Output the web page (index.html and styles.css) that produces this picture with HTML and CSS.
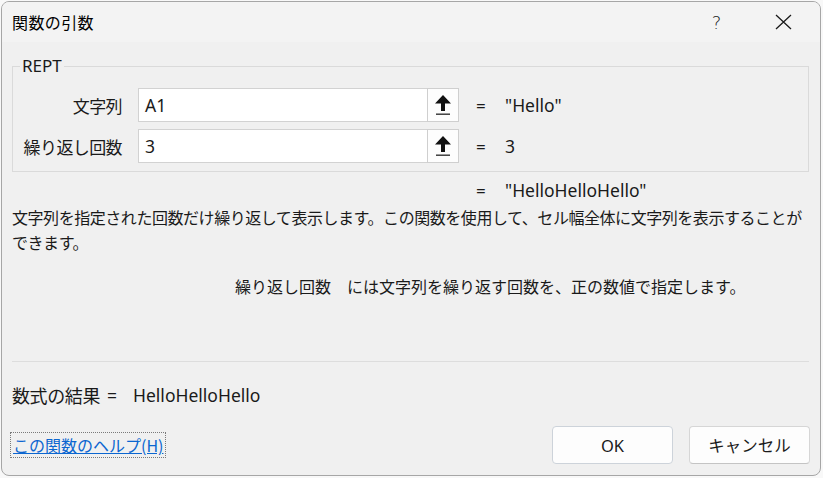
FILE: index.html
```html
<!DOCTYPE html>
<html lang="ja">
<head>
    <meta charset="UTF-8">
    <title>関数の引数</title>
    <link rel="stylesheet" href="styles.css">
</head>
<body>
<div class="dialog">
    <div class="titlebar">
        <span class="title">関数の引数</span>
        <span class="ctrl help">?</span>
        <span class="ctrl close">
            <svg width="17" height="16" viewBox="0 0 17 16"><path d="M1 1 L16 15 M16 1 L1 15" stroke="#1b1b1b" stroke-width="1.3" fill="none"/></svg>
        </span>
    </div>
    <div class="content">
        <fieldset class="args">
            <legend>REPT</legend>
            <div class="arg-row">
                <label>文字列</label>
                <div class="ref-box">
                    <span class="ref-input">A1</span>
                    <span class="ref-btn">
                        <svg width="18" height="22" viewBox="0 0 18 22"><path d="M9 1 L17 9.5 L11 9.5 L11 17 L7 17 L7 9.5 L1 9.5 Z" fill="#111"/><rect x="2" y="19.5" width="14" height="1.4" fill="#333"/></svg>
                    </span>
                </div>
                <span class="eq">=</span>
                <span class="val">"Hello"</span>
            </div>
            <div class="arg-row">
                <label>繰り返し回数</label>
                <div class="ref-box">
                    <span class="ref-input">3</span>
                    <span class="ref-btn">
                        <svg width="18" height="22" viewBox="0 0 18 22"><path d="M9 1 L17 9.5 L11 9.5 L11 17 L7 17 L7 9.5 L1 9.5 Z" fill="#111"/><rect x="2" y="19.5" width="14" height="1.4" fill="#333"/></svg>
                    </span>
                </div>
                <span class="eq">=</span>
                <span class="val">3</span>
            </div>
        </fieldset>
        <div class="total">
            <span class="eq">=</span>
            <span class="val">"HelloHelloHello"</span>
        </div>
        <p class="desc">文字列を指定された回数だけ繰り返して表示します。この関数を使用して、セル幅全体に文字列を表示することができます。</p>
        <p class="arg-help">繰り返し回数　には文字列を繰り返す回数を、正の数値で指定します。</p>
        <div class="spacer"></div>
        <div class="sep"></div>
        <div class="result">
            <span class="result-label">数式の結果</span>
            <span class="result-eq">=</span>
            <span class="result-val">HelloHelloHello</span>
        </div>
        <div class="footer">
            <a class="help-link" href="#">この関数のヘルプ(H)</a>
            <div class="buttons">
                <button class="btn ok">OK</button>
                <button class="btn">キャンセル</button>
            </div>
        </div>
    </div>
</div>
</body>
</html>
```

FILE: styles.css
```css
html, body {
    margin: 0;
    height: 100%;
}
body {
    background: #f8f8f8;
    font-family: "Noto Sans", "Noto Sans CJK JP", sans-serif;
    color: #1a1a1a;
}
.dialog {
    box-sizing: border-box;
    margin: 1px;
    width: 820px;
    height: 475px;
    border: 1px solid #a6a6a6;
    border-radius: 8px;
    background: #f0f0f0;
    display: flex;
    flex-direction: column;
    overflow: hidden;
}
.titlebar {
    height: 40px;
    flex: none;
    display: flex;
    align-items: center;
    padding-left: 10px;
    background: #f3f3f3;
}
.title {
    font-family: "Noto Sans CJK JP", sans-serif;
    font-size: 16px;
    letter-spacing: 0.4px;
    color: #000;
    margin-right: auto;
}
.ctrl {
    width: 67px;
    height: 40px;
    display: flex;
    align-items: center;
    justify-content: center;
}
.ctrl.help {
    font-family: "DejaVu Sans", sans-serif;
    font-size: 18px;
    font-weight: 300;
    color: #222;
}
.ctrl.close {
    margin-right: 3px;
}
.content {
    flex: 1;
    display: flex;
    flex-direction: column;
    padding: 14px 11px 11px 10px;
}
.args {
    margin: 0;
    padding: 12px 0 8px 7px;
    border: 1px solid #dadada;
}
.args legend {
    padding: 0 2px;
    font-size: 17px;
    line-height: 20px;
}
.arg-row {
    display: flex;
    align-items: center;
    height: 34px;
}
.arg-row + .arg-row {
    margin-top: 7px;
}
.arg-row label {
    width: 102px;
    margin-right: 16px;
    text-align: right;
    font-family: "Noto Sans CJK JP", sans-serif;
    font-size: 17px;
    letter-spacing: -0.6px;
}
.ref-box {
    display: flex;
    height: 34px;
}
.ref-input {
    box-sizing: border-box;
    width: 289px;
    height: 34px;
    padding-left: 6px;
    background: #fff;
    border: 1px solid #d2d2d2;
    border-right: none;
    font-size: 17.5px;
    line-height: 32px;
}
.ref-btn {
    box-sizing: border-box;
    width: 32px;
    height: 34px;
    background: #fdfdfd;
    border: 1px solid #cfcfcf;
    display: flex;
    align-items: center;
    justify-content: center;
}
.eq {
    width: 29px;
    margin-left: 17px;
    font-size: 17px;
}
.val {
    font-size: 17.5px;
}
.total {
    display: flex;
    align-items: center;
    height: 22px;
    margin-top: 7px;
    padding-left: 447px;
}
.desc, .arg-help {
    margin: 0;
    font-family: "Noto Sans CJK JP", sans-serif;
    font-size: 16px;
    letter-spacing: -0.45px;
    line-height: 25px;
}
.desc {
    margin-top: 4px;
    width: 800px;
}
.arg-help {
    margin-top: 19px;
    padding-left: 223px;
    letter-spacing: 0;
}
.spacer {
    flex: 1;
}
.sep {
    height: 1px;
    width: 797px;
    background: #dddddd;
}
.result {
    display: flex;
    align-items: center;
    margin-top: 22px;
    height: 22px;
    font-size: 17.5px;
}
.result-label {
    font-family: "Noto Sans CJK JP", sans-serif;
    font-size: 18px;
    letter-spacing: -0.4px;
}
.result-eq {
    margin-left: 7px;
}
.result-val {
    margin-left: 16px;
}
.footer {
    margin-top: 20px;
    display: flex;
    align-items: center;
    justify-content: space-between;
}
.help-link {
    margin-left: -2px;
    padding: 0 2px;
    border: 1px dotted #7a7a7a;
    line-height: 24px;
    font-family: "Noto Sans CJK JP", sans-serif;
    font-size: 16px;
    color: #0b66d0;
}
.buttons {
    display: flex;
    gap: 16px;
    margin-right: -1px;
}
.btn {
    box-sizing: border-box;
    width: 121px;
    height: 38px;
    background: #fdfdfd;
    border: 1px solid #d6d6d6;
    border-bottom-color: #c4c4c4;
    border-radius: 4px;
    font-family: "Noto Sans", "Noto Sans CJK JP", sans-serif;
    font-size: 16.5px;
    color: #1a1a1a;
}
.btn.ok {
    border-color: #cdd3da;
}
```
